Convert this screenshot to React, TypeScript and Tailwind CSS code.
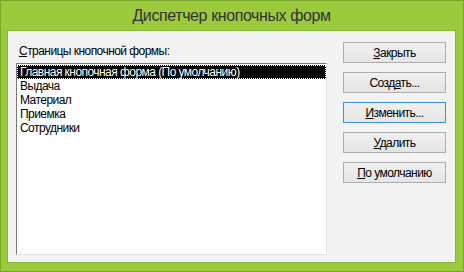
export default function App() {
  const items = [
    'Главная кнопочная форма (По умолчанию)',
    'Выдача',
    'Материал',
    'Приемка',
    'Сотрудники',
  ];
  const buttons: { before: string; key: string; after: string; focused?: boolean }[] = [
    { before: '', key: 'З', after: 'акрыть' },
    { before: 'Созд', key: 'а', after: 'ть...' },
    { before: '', key: 'И', after: 'зменить...', focused: true },
    { before: '', key: 'У', after: 'далить' },
    { before: '', key: 'П', after: 'о умолчанию' },
  ];

  return (
    <div
      className="w-[464px] h-[272px] flex flex-col bg-[#9cca3d] border border-[#7aa82a] pl-[6px] pr-[7px] pb-[8px] text-[12px] tracking-[-0.55px] text-black"
      style={{ fontFamily: '"Liberation Sans", Arial, sans-serif' }}
    >
      <div className="h-[29px] flex items-center justify-center text-[16px] tracking-[-0.4px] text-[#333333]">
        Диспетчер кнопочных форм
      </div>

      <div className="flex-1 flex border border-[#86b636] bg-[#f3f3f3] pl-[8px] pt-[11px] gap-[16px]">
        <div className="flex flex-col pt-[1px]">
          <div className="h-[20px] pl-[3px] leading-[16px]">
            <span className="underline">С</span>траницы кнопочной формы:
          </div>
          <div className="w-[311px] h-[192px] bg-white border-t border-l border-t-[#7a7a7a] border-l-[#7a7a7a] border-b border-r border-b-[#e3e3e3] border-r-[#e3e3e3] pt-[1px]">
            {items.map((item, i) =>
              i === 0 ? (
                <div
                  key={item}
                  className="h-[14px] leading-[12px] bg-black text-white border border-dotted border-white pl-[2px] whitespace-nowrap"
                >
                  {item}
                </div>
              ) : (
                <div key={item} className="h-[14px] leading-[14px] pl-[3px] whitespace-nowrap">
                  {item}
                </div>
              )
            )}
          </div>
        </div>

        <div className="flex flex-col gap-[9px] w-[103px]">
          {buttons.map((b) => (
            <div
              key={b.key}
              className={
                'h-[21px] flex items-center justify-center border bg-gradient-to-b from-[#f0f0f0] to-[#e5e5e5] ' +
                (b.focused ? 'border-[#3c8fde]' : 'border-[#acacac]')
              }
            >
              <span>
                {b.before}
                <span className="underline">{b.key}</span>
                {b.after}
              </span>
            </div>
          ))}
        </div>
      </div>
    </div>
  );
}
